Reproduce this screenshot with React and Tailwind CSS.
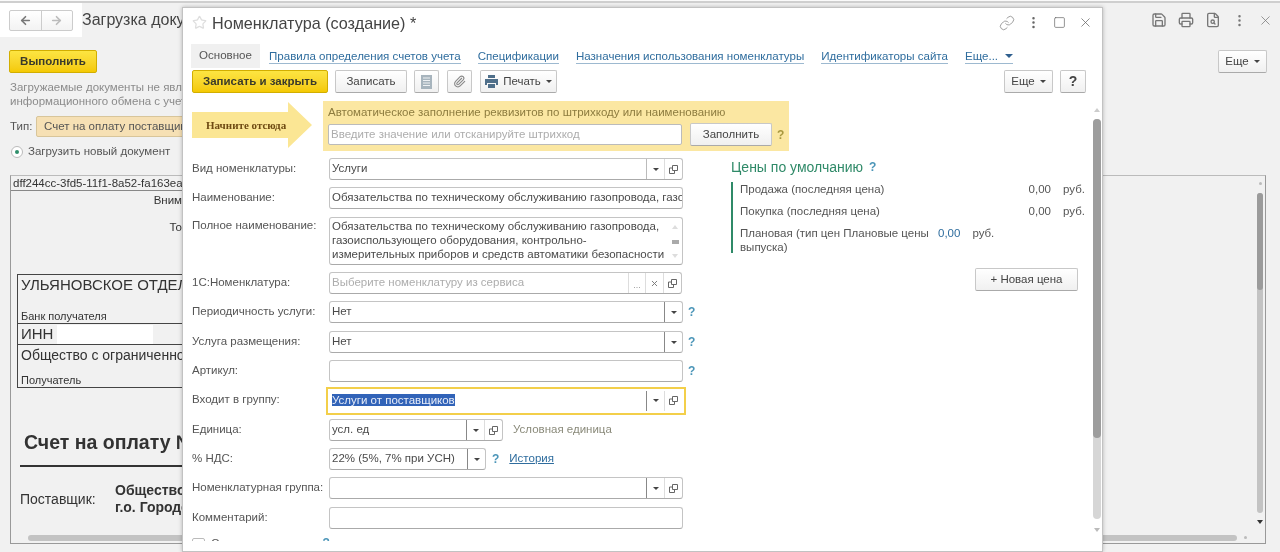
import React from 'react';
import { ArrowLeft, ArrowRight, Link, MoreVertical, Paperclip, Printer, Save, FileSearch, Square, Star, X } from 'lucide-react';

const OpenIcon = () => (
  <svg width="11" height="11" viewBox="0 0 11 11" fill="none" stroke="#666" strokeWidth="1">
    <path d="M4.5 1.5h5v5h-5z" />
    <path d="M4.5 4h-3v5.500h5v-3" />
  </svg>
);

const Caret = ({ className = '' }) => (
  <span className={`w-0 h-0 border-x-[3px] border-x-transparent border-t-[3px] border-t-[#444] ${className}`} />
);

function Btn({ children, className = '' }) {
  return (
    <button className={`flex items-center justify-center h-[23px] rounded-[2px] border border-[#c8c8c8] border-b-[#aaa] bg-gradient-to-b from-white to-[#f0f0f0] text-[11.5px] text-[#444] ${className}`}>
      {children}
    </button>
  );
}

function YellowBtn({ children, className = '' }) {
  return (
    <button className={`flex items-center justify-center h-[23px] rounded-[2px] border border-[#d2ae00] bg-gradient-to-b from-[#fde541] to-[#f4c900] text-[11.5px] font-bold text-[#3a3a2a] ${className}`}>
      {children}
    </button>
  );
}

function Field({ className = 'w-[354px]', value, placeholder, dd, dots, clear, open, darkDd, selected }) {
  return (
    <div className={`flex h-[22px] shrink-0 rounded-[3px] border border-[#c4c4c4] border-b-[#aaa] bg-white text-[11.5px] text-[#4a4a4a] ${className}`}>
      <div className="flex-1 min-w-0 px-[2px] leading-[19px] whitespace-nowrap overflow-hidden">
        {selected ? <span className="bg-[#3163b8] text-[#e8edf8]">{value}</span> : value}
        {placeholder && <span className="text-[#adadad]">{placeholder}</span>}
      </div>
      {dots && <div className="w-[17px] border-l border-[#ddd] flex items-end justify-center pb-[3px] text-[9px] leading-none text-[#999]">...</div>}
      {clear && <div className="w-[18px] border-l border-[#ddd] flex items-center justify-center"><X size={9} strokeWidth={2.5} color="#777" /></div>}
      {dd && <div className={`w-[18px] border-l flex items-center justify-center ${darkDd ? 'border-[#888]' : 'border-[#bbb]'}`}><Caret /></div>}
      {open && <div className="w-[18px] border-l border-[#ddd] flex items-center justify-center"><OpenIcon /></div>}
    </div>
  );
}

const Help = ({ className = 'text-[#4b95b8]' }) => <span className={`text-[12px] font-bold ${className}`}>?</span>;

function Row({ label, children, className = '' }) {
  return (
    <div className={`flex items-center ${className}`}>
      <div className="w-[137px] shrink-0 pb-[1px] text-[11.5px] text-[#555] whitespace-nowrap">{label}</div>
      {children}
    </div>
  );
}

const tabs = ['Правила определения счетов учета', 'Спецификации', 'Назначения использования номенклатуры', 'Идентификаторы сайта'];

function Background() {
  return (
    <div className="h-full flex flex-col">
      <div className="h-[3px] shrink-0 bg-[#fafafa] border-b-2 border-[#cfcfcf]" />
      <div className="flex items-start h-[47px] shrink-0">
        <div className="flex items-start bg-white w-[82px] h-[34px] pl-[9px] pt-[7px]">
          <div className="flex h-[21px] w-[64px] rounded-[2px] border border-[#ccc] bg-gradient-to-b from-white to-[#f3f3f3]">
            <div className="flex-1 flex items-center justify-center border-r border-[#ccc]"><ArrowLeft size={13} strokeWidth={3} color="#777" /></div>
            <div className="flex-1 flex items-center justify-center"><ArrowRight size={13} strokeWidth={3} color="#bbb" /></div>
          </div>
        </div>
        <div className="pt-[5px] text-[16px] leading-[24px] text-[#444] whitespace-nowrap">Загрузка документов</div>
        <div className="ml-auto flex items-center gap-[11px] pt-[9px] pr-[7px]">
          <Save size={16} color="#777" />
          <Printer size={16} color="#777" />
          <FileSearch size={16} color="#777" />
          <MoreVertical size={15} color="#777" />
          <X size={15} strokeWidth={1.2} color="#777" />
        </div>
      </div>
      <div className="flex justify-between shrink-0 pl-[9px] pr-[13px]">
        <YellowBtn className="w-[88px]">Выполнить</YellowBtn>
        <Btn className="w-[49px] gap-[5px]">Еще <Caret /></Btn>
      </div>
      <div className="mt-[7px] pl-[10px] text-[11.5px] leading-[14px] text-[#8b8b8b] whitespace-nowrap">
        <p>Загружаемые документы не являются</p>
        <p>информационного обмена с учетной</p>
      </div>
      <div className="mt-[8px] pl-[10px] flex items-center text-[11.5px] text-[#555]">
        <span className="w-[26px]">Тип:</span>
        <div className="w-[300px] h-[21px] rounded-[2px] border border-[#d8c59a] bg-[#f6e0b4] px-[7px] leading-[19px] whitespace-nowrap">Счет на оплату поставщика</div>
      </div>
      <div className="mt-[6px] pl-[11px] flex items-center gap-[5px] text-[11.5px] text-[#555]">
        <span className="flex items-center justify-center w-[12px] h-[12px] rounded-full border border-[#bbb] bg-white">
          <span className="w-[4px] h-[4px] rounded-full bg-[#2f8f6b]" />
        </span>
        Загрузить новый документ
      </div>
      <div className="relative mt-[15px] ml-[10px] w-[1256px] h-[369px] border border-[#999] border-t-[#bbb] text-[#333] overflow-hidden">
        <div className="w-[300px] h-[15px] border-b border-[#888] pl-[2px] text-[11.5px] leading-[15px] whitespace-nowrap">dff244cc-3fd5-11f1-8a52-fa163eac</div>
        <div className="w-[171px] mt-[2px] text-right text-[11.5px] leading-[14px] h-[14px] overflow-hidden whitespace-nowrap">Вним</div>
        <div className="w-[171px] mt-[13px] text-right text-[11.5px] leading-[14px] h-[14px] overflow-hidden whitespace-nowrap">То</div>
        <div className="ml-[6px] mt-[40px] w-[300px] h-[114px] border border-[#444] flex flex-col">
          <div className="h-[49px] shrink-0 border-b border-[#444] pl-[3px] flex flex-col justify-between">
            <span className="text-[15px] leading-[20px] whitespace-nowrap">УЛЬЯНОВСКОЕ ОТДЕЛЕНИЕ</span>
            <span className="text-[11px] leading-[14px]">Банк получателя</span>
          </div>
          <div className="h-[21px] shrink-0 border-b border-[#444] pl-[3px] flex items-center text-[15px]">
            ИНН<span className="ml-[4px] w-[96px] h-[19px] bg-white" />
          </div>
          <div className="flex-1 pl-[3px] flex flex-col justify-between">
            <span className="text-[14px] leading-[20px] whitespace-nowrap">Общество с ограниченной</span>
            <span className="text-[11px] leading-[14px]">Получатель</span>
          </div>
        </div>
        <div className="ml-[13px] mt-[43px] text-[19.5px] leading-[22px] font-bold whitespace-nowrap">Счет на оплату №</div>
        <div className="ml-[9px] mt-[12px] w-[300px] h-[2px] bg-[#333]" />
        <div className="ml-[9px] mt-[15px] flex items-center">
          <span className="w-[95px] text-[14px]">Поставщик:</span>
          <div className="text-[14px] leading-[17px] font-bold whitespace-nowrap">
            <p>Общество с</p>
            <p>г.о. Городской</p>
          </div>
        </div>
        <div className="absolute left-[17px] top-[359px] w-[1209px] h-[6px] rounded-full bg-[#c3c3c3]" />
        <div className="absolute left-[1233px] top-[360px] w-[3px] h-[3px] rounded-full bg-[#bbb]" />
        <div className="absolute left-[1246px] top-[6px] w-[6px] h-[4px] flex justify-center"><span className="w-[3px] h-[3px] rounded-full bg-[#bbb]" /></div>
        <div className="absolute left-[1246px] top-[17px] w-[6px] h-[320px] rounded-full bg-[#c3c3c3]">
          <div className="h-[97px] rounded-full bg-[#9b9b9b]" />
        </div>
        <div className="absolute left-[1246px] top-[344px] w-0 h-0 border-x-[3px] border-x-transparent border-t-[4px] border-t-[#333]" />
      </div>
    </div>
  );
}

function Prices() {
  return (
    <div className="ml-[37px] w-[353px] text-[11.5px] text-[#555]">
      <div className="flex items-center gap-[6px] text-[14px] leading-[18px] text-[#2f8a68]">Цены по умолчанию <Help /></div>
      <div className="mt-[6px] border-l-2 border-[#2f8a68] pl-[7px] h-[71px] flex flex-col gap-[8px] leading-[14px]">
        <div className="flex">
          <span className="flex-1 whitespace-nowrap">Продажа (последняя цена)</span>
          <span className="w-[23px] text-right">0,00</span>
          <span className="ml-[12px] w-[21px]">руб.</span>
        </div>
        <div className="flex">
          <span className="flex-1 whitespace-nowrap">Покупка (последняя цена)</span>
          <span className="w-[23px] text-right">0,00</span>
          <span className="ml-[12px] w-[21px]">руб.</span>
        </div>
        <div className="flex">
          <span className="w-[191px]">Плановая (тип цен Плановые цены выпуска)</span>
          <span className="ml-[7px] text-[#2f6d9e]">0,00</span>
          <span className="ml-[12px]">руб.</span>
        </div>
      </div>
      <div className="flex justify-end pr-[6px] mt-[15px]">
        <Btn className="w-[103px] pt-[1px]">+ Новая цена</Btn>
      </div>
    </div>
  );
}

function Modal() {
  return (
    <div className="absolute left-[182px] top-[7px] w-[921px] h-[545px] flex flex-col bg-white border border-[#c2c2c2] shadow-[0_0_4px_rgba(0,0,0,0.25)] overflow-hidden">
      <div className="flex items-center h-[36px] shrink-0 pb-[7px] pl-[9px] pr-[9px]">
        <Star size={15} color="#dedede" />
        <span className="ml-[5px] mt-[1px] text-[16.200px] text-[#444] whitespace-nowrap">Номенклатура (создание) *</span>
        <div className="ml-auto flex items-center gap-[11px]">
          <Link size={16} strokeWidth={1.2} color="#888" />
          <MoreVertical size={15} color="#666" />
          <Square size={13} strokeWidth={1.3} color="#666" className="mx-[1px]" />
          <X size={15} strokeWidth={1.2} color="#666" />
        </div>
      </div>
      <div className="flex items-end h-[24px] shrink-0 pl-[8px] text-[11.55px] whitespace-nowrap">
        <div className="w-[69px] h-[24px] bg-[#f0f0f0] text-[#555] text-center leading-[23px]">Основное</div>
        <div className="flex gap-[17px] ml-[9px] h-[24px] items-center text-[#2f6d9e]">
          {tabs.map(tab => (
            <span key={tab} className="border-b border-[#9db9d0] leading-[14px]">{tab}</span>
          ))}
          <span className="flex items-center gap-[7px] border-b border-[#9db9d0] leading-[14px]">
            Еще... <span className="w-0 h-0 border-x-[4px] border-x-transparent border-t-[4px] border-t-[#2f5f8e]" />
          </span>
        </div>
      </div>
      <div className="flex items-center h-[24px] mt-[1px] shrink-0 pl-[9px] pr-[16px] [&>button]:pt-[1px]">
        <YellowBtn className="w-[136px]">Записать и закрыть</YellowBtn>
        <Btn className="ml-[7px] w-[72px]">Записать</Btn>
        <Btn className="ml-[7px] w-[25px]">
          <svg width="11" height="14" viewBox="0 0 11 14"><path d="M0 0h11v14H0z" fill="#a7b4bd" /><path d="M2 3h7M2 5.5h7M2 8h7M2 10.500h7" stroke="#eef1f3" /></svg>
        </Btn>
        <Btn className="ml-[8px] w-[25px]"><Paperclip size={13} color="#888" /></Btn>
        <Btn className="ml-[8px] w-[77px] gap-[5px]">
          <svg width="13" height="13" viewBox="0 0 13 13"><path d="M3 0h7v3H3zM0 4h13v6h-2V8H2v2H0zM3 9h7v4H3z" fill="#4f6f8a" /></svg>
          Печать <Caret />
        </Btn>
        <Btn className="ml-auto w-[49px] gap-[5px]">Еще <Caret /></Btn>
        <Btn className="ml-[7px] w-[26px] font-bold text-[14px]">?</Btn>
      </div>
      <div className="flex flex-1 min-h-0 mt-[8px]">
        <div className="flex-1 min-w-0 h-[440px] pl-[9px] overflow-hidden">
          <div className="flex h-[50px]">
            <div className="w-[120px] h-[46px] mt-[1px] bg-[#fbe694] [clip-path:polygon(0_22%,80%_22%,80%_0,100%_50%,80%_100%,80%_78%,0_78%)] flex items-center pl-[14px] text-[11px] font-bold text-[#6e4a12] font-['Liberation_Serif'] whitespace-nowrap">
              Начните отсюда
            </div>
            <div className="ml-[11px] w-[466px] h-[50px] bg-[#fbe7a2] pl-[5px] pt-[4px]">
              <div className="text-[11.5px] leading-[15px] text-[#8d7c3f] whitespace-nowrap">Автоматическое заполнение реквизитов по штрихкоду или наименованию</div>
              <div className="flex items-center mt-[3px]">
                <div className="w-[354px] h-[21px] rounded-[2px] border border-[#bbb] bg-white px-[2px] text-[11.5px] leading-[18px] text-[#adadad] whitespace-nowrap">Введите значение или отсканируйте штрихкод</div>
                <Btn className="ml-[8px] w-[82px]">Заполнить</Btn>
                <Help className="ml-[5px] text-[#a8983f]" />
              </div>
            </div>
          </div>
          <div className="flex mt-[7px]">
            <div className="w-[502px] flex flex-col">
              <Row label="Вид номенклатуры:"><Field value="Услуги" dd open /></Row>
              <Row label="Наименование:" className="mt-[7px]"><Field value="Обязательства по техническому обслуживанию газопровода, газоиспользующего" /></Row>
              <div className="flex mt-[8px]">
                <div className="w-[137px] shrink-0 text-[11.5px] text-[#555]">Полное наименование:</div>
                <div className="flex w-[354px] h-[48px] rounded-[3px] border border-[#c4c4c4] border-b-[#aaa] pl-[2px] pt-[1px] text-[11.5px] leading-[14px] text-[#4a4a4a]">
                  <div className="flex-1">Обязательства по техническому обслуживанию газопровода, газоиспользующего оборудования, контрольно-измерительных приборов и средств автоматики безопасности</div>
                  <div className="w-[14px] flex flex-col items-center justify-between py-[6px]">
                    <span className="w-0 h-0 border-x-[3px] border-x-transparent border-b-[4px] border-b-[#ddd]" />
                    <span className="w-[7px] h-[4px] bg-[#aaa]" />
                    <span className="w-0 h-0 border-x-[3px] border-x-transparent border-t-[4px] border-t-[#ddd]" />
                  </div>
                </div>
              </div>
              <Row label="1С:Номенклатура:" className="mt-[7px]"><Field className="w-[353px]" placeholder="Выберите номенклатуру из сервиса" dots clear open /></Row>
              <Row label="Периодичность услуги:" className="mt-[7px]"><Field value="Нет" dd darkDd /><Help className="ml-[5px] text-[#4b95b8]" /></Row>
              <Row label="Услуга размещения:" className="mt-[8px]"><Field value="Нет" dd darkDd /><Help className="ml-[5px] text-[#4b95b8]" /></Row>
              <Row label="Артикул:" className="mt-[7px]"><Field /><Help className="ml-[5px] text-[#4b95b8]" /></Row>
              <Row label="Входит в группу:" className="mt-[5px] h-[27px]">
                <div className="-ml-[3px] p-[1px] border-2 border-[#f3cf4a]">
                  <Field className="w-[354px] !border-transparent" value="Услуги от поставщиков" selected dd darkDd open />
                </div>
              </Row>
              <Row label="Единица:" className="mt-[5px]">
                <Field className="w-[174px]" value="усл. ед" dd darkDd open />
                <span className="ml-[10px] text-[11.5px] text-[#8a8a7a]">Условная единица</span>
              </Row>
              <Row label="% НДС:" className="mt-[7px]">
                <Field className="w-[157px]" value="22% (5%, 7% при УСН)" dd darkDd />
                <Help className="ml-[6px] text-[#4b95b8]" />
                <span className="ml-[10px] text-[11.5px] text-[#2f6d9e] underline">История</span>
              </Row>
              <Row label="Номенклатурная группа:" className="mt-[7px]"><Field dd darkDd open /></Row>
              <Row label="Комментарий:" className="mt-[8px]"><Field /></Row>
              <div className="flex items-start gap-[6px] mt-[9px] text-[11.5px] leading-[11px] text-[#555] whitespace-nowrap">
                <span className="w-[13px] h-[13px] rounded-[2px] border border-[#bbb]" />
                Скрывать в списках
                <Help />
              </div>
            </div>
            <Prices />
          </div>
        </div>
        <div className="w-[10px] shrink-0 flex flex-col items-center pt-[7px]">
          <span className="w-0 h-0 border-x-[3px] border-x-transparent border-b-[4px] border-b-[#ccc]" />
          <div className="mt-[7px] w-[8px] h-[400px] rounded-full bg-[#d6d6d6]">
            <div className="h-[319px] rounded-full bg-[#9d9d9d]" />
          </div>
          <span className="mt-[9px] w-0 h-0 border-x-[3px] border-x-transparent border-t-[4px] border-t-[#bbb]" />
        </div>
      </div>
    </div>
  );
}

export default function App() {
  return (
    <div className="relative w-[1280px] h-[552px] overflow-hidden bg-[#f1f1f1] blur-[0.3px] font-['Liberation_Sans',Arial,sans-serif]">
      <Background />
      <Modal />
    </div>
  );
}
